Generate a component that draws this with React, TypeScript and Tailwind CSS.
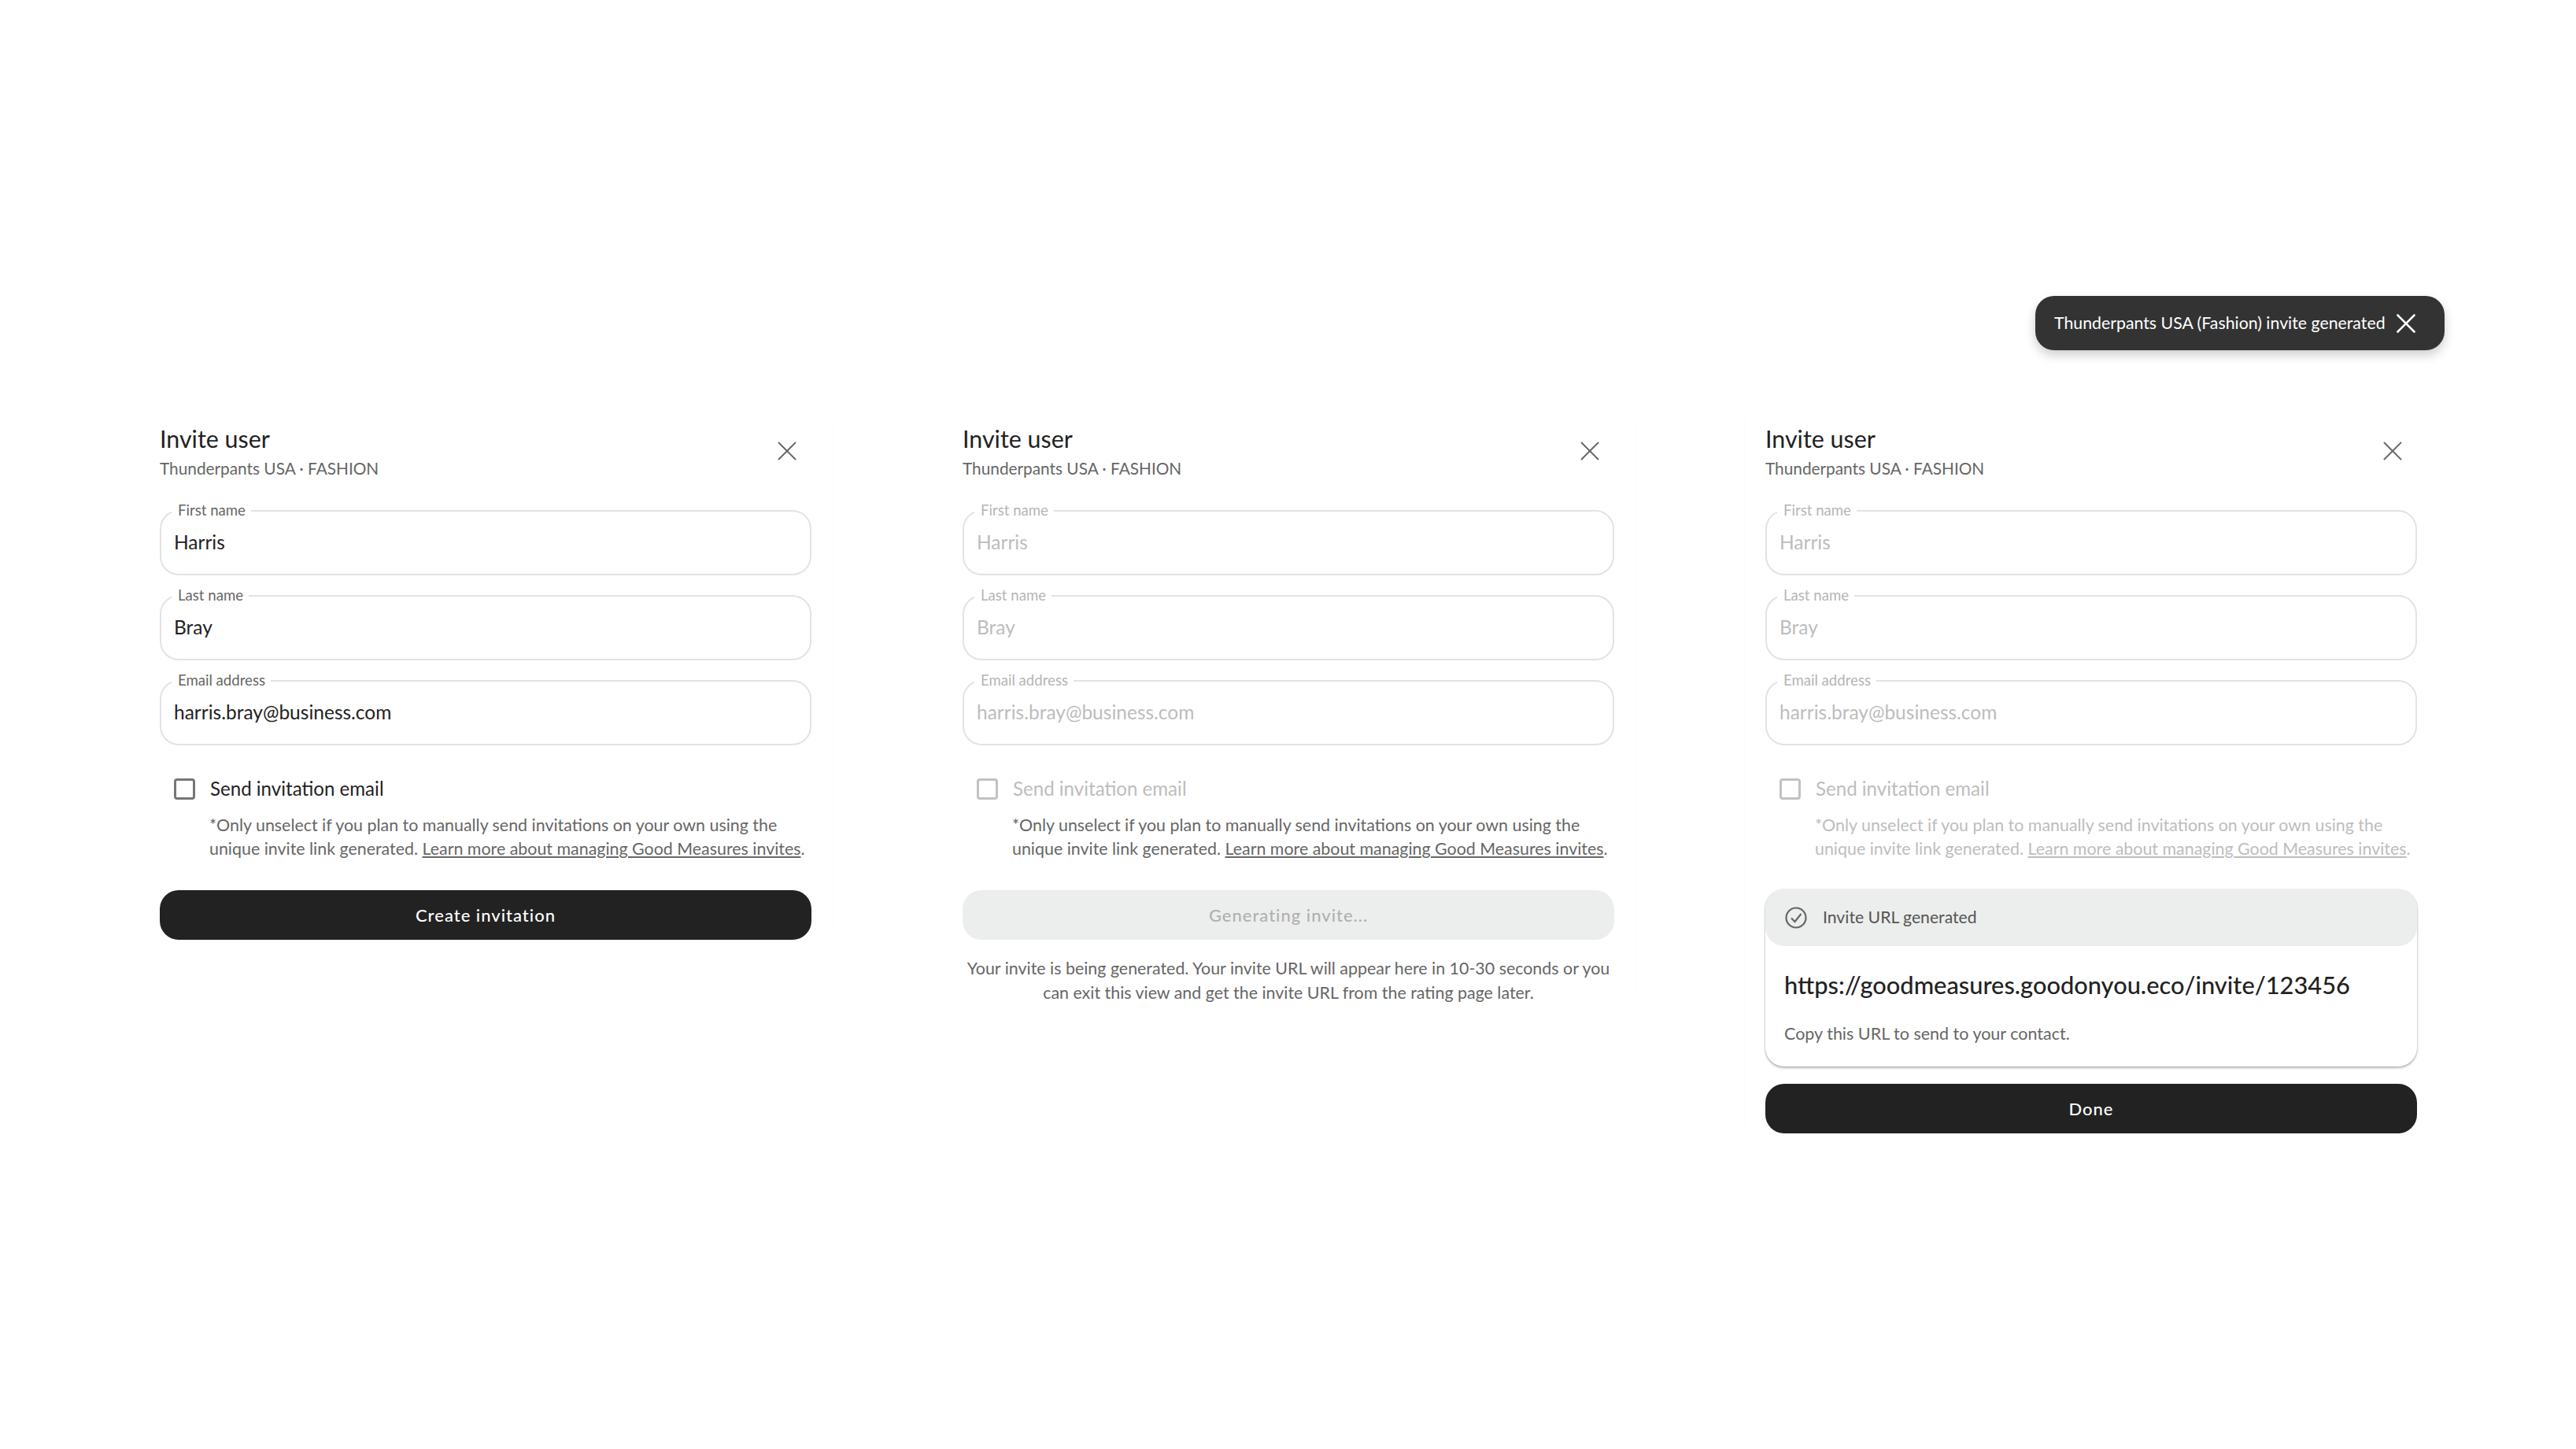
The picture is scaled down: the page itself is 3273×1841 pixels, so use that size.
import { X } from 'lucide-react'

const font = "font-['Lato','Liberation_Sans',sans-serif]"

function Field({ label, value, muted }: { label: string; value: string; muted: boolean }) {
  return (
    <div className="relative flex h-[83px] items-center rounded-[24px] border-2 border-[#e2e3e3] px-[16px]">
      <span
        className={`absolute -top-[13px] left-[13px] bg-white pr-[7px] pl-[8px] text-[18.6px] leading-[22px] ${
          muted ? 'text-[#b5b5b5]' : 'text-[#666]'
        }`}
      >
        {label}
      </span>
      <span className={`text-[24.5px] ${muted ? 'text-[#bdbdbd]' : 'text-[#222]'}`}>{value}</span>
    </div>
  )
}

function InviteForm({ muted, helpMuted }: { muted: boolean; helpMuted: boolean }) {
  return (
    <>
      <div className="flex items-start justify-between">
        <div>
          <h2 className="text-[30.4px] leading-[36px] text-[#222]">Invite user</h2>
          <p className="mt-[3px] text-[20.8px] leading-[34px] text-[#666]">Thunderpants USA · FASHION</p>
        </div>
        <X className="mt-[13px] mr-[10px] size-[42px] text-[#666]" strokeWidth={1.1} />
      </div>
      <div className="mt-[36px] flex flex-col gap-[25px]">
        <Field label="First name" value="Harris" muted={muted} />
        <Field label="Last name" value="Bray" muted={muted} />
        <Field label="Email address" value="harris.bray@business.com" muted={muted} />
      </div>
      <div className="mt-[41px] flex items-center gap-[19px] pl-[18px]">
        <span className={`size-[27px] rounded-[4px] border-[3px] ${muted ? 'border-[#c2c2c2]' : 'border-[#767676]'}`} />
        <span className={`text-[24.1px] leading-[28px] ${muted ? 'text-[#bdbdbd]' : 'text-[#222]'}`}>Send invitation email</span>
      </div>
      <p className={`mt-[17px] pl-[63px] text-[21.4px] leading-[30px] whitespace-nowrap ${helpMuted ? 'text-[#bdbdbd]' : 'text-[#666]'}`}>
        *Only unselect if you plan to manually send invitations on your own using the
        <br />
        unique invite link generated. <span className="underline underline-offset-2">Learn more about managing Good Measures invites</span>.
      </p>
    </>
  )
}

function Panel({ children }: { children: React.ReactNode }) {
  return <section className="w-[881px] rounded-[32px] bg-white pt-[38px] pr-[27px] pb-[23px] pl-[26px] shadow-[0_0_2px_rgba(0,0,0,0.03)]">{children}</section>
}

export default function App() {
  return (
    <div className={`relative min-h-[1841px] bg-white ${font}`}>
      <div className="absolute top-[376px] left-[2586px] flex h-[69px] w-[520px] items-center justify-between rounded-[24px] bg-[#333] pr-[28px] pl-[24px] text-white shadow-[0_6px_14px_rgba(0,0,0,0.2)]">
        <span className="text-[21.3px] whitespace-nowrap">Thunderpants USA (Fashion) invite generated</span>
        <X className="size-[42px]" strokeWidth={1.5} />
      </div>

      <main className="flex items-start gap-[139px] pt-[501px] pl-[177px]">
        <Panel>
          <InviteForm muted={false} helpMuted={false} />
          <button className="mt-[38px] flex h-[63px] w-full items-center justify-center rounded-[24px] bg-[#222] text-[22px] font-medium tracking-[1px] text-white">
            Create invitation
          </button>
        </Panel>

        <Panel>
          <InviteForm muted={true} helpMuted={false} />
          <button className="mt-[38px] flex h-[63px] w-full items-center justify-center rounded-[24px] bg-[#eceeed] text-[22px] font-medium tracking-[1px] text-[#b0b0b0]">
            Generating invite...
          </button>
          <p className="mt-[21px] text-center text-[21.4px] leading-[31px] whitespace-nowrap text-[#666]">
            Your invite is being generated. Your invite URL will appear here in 10-30 seconds or you
            <br />
            can exit this view and get the invite URL from the rating page later.
          </p>
        </Panel>

        <Panel>
          <InviteForm muted={true} helpMuted={true} />
          <div className="mt-[37px] h-[225px] rounded-[24px] bg-white shadow-[0_2px_3px_rgba(0,0,0,0.28),0_0_2px_rgba(0,0,0,0.2)]">
            <div className="flex h-[72px] items-center gap-[20px] rounded-[24px] bg-[#eceeed] pl-[25px]">
              <svg viewBox="0 0 28 28" className="size-[28px] text-[#666]" fill="none" stroke="currentColor" strokeWidth="2.2">
                <circle cx="14" cy="14" r="12.5" />
                <path d="M8 14.5l4.5 4.5L20.5 9" />
              </svg>
              <span className="text-[21.2px] text-[#555]">Invite URL generated</span>
            </div>
            <p className="mt-[30px] pl-[24px] text-[30.8px] leading-[40px] font-medium whitespace-nowrap text-[#222]">
              https://goodmeasures.goodonyou.eco/invite/123456
            </p>
            <p className="mt-[27px] pl-[24px] text-[21.5px] leading-[28px] text-[#666]">Copy this URL to send to your contact.</p>
          </div>
          <button className="mt-[22px] flex h-[63px] w-full items-center justify-center rounded-[24px] bg-[#222] text-[22px] font-medium tracking-[1px] text-white">
            Done
          </button>
        </Panel>
      </main>
    </div>
  )
}
